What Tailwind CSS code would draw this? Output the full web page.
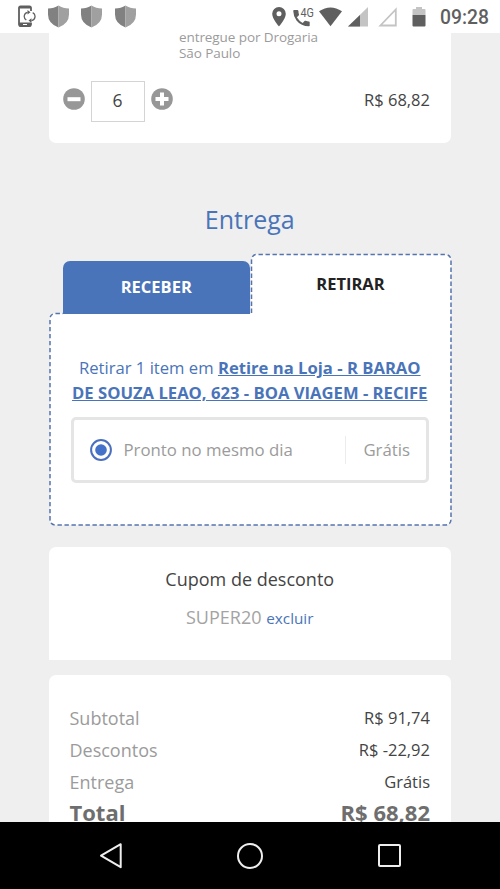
<!DOCTYPE html>
<html lang="pt-BR">
<head>
<meta charset="utf-8">
<meta name="viewport" content="width=device-width, initial-scale=1">
<title>Carrinho</title>
<script src="https://cdn.jsdelivr.net/npm/@tailwindcss/browser@4"></script>
</head>
<body class="flex h-[889px] w-[500px] flex-col overflow-hidden bg-[#efefef] font-['Open_Sans',sans-serif] text-[#444]">
  <!-- Status bar -->
  <header class="flex h-[33px] shrink-0 items-center bg-white pl-[16.500px] pr-[11px] text-[#5f5f5f]">
    <svg class="mr-[12px] h-[23px] w-[19px]" viewBox="0 0 19 23"><path d="M14 6V3Q14 1.500 12.500 1.500H3.500Q2 1.500 2 3V19.500Q2 21 3.500 21H12.500Q14 21 14 19.500V18" fill="none" stroke="currentColor" stroke-width="1.800"/><path d="M2 1H14V3.500H2zM2 17.500H14V21.500H2z" fill="currentColor"/><rect x="6" y="19" width="4" height="1" fill="#fff"/><path d="M9.300 15A4.200 4.200 0 0 1 10.500 7.300M15.700 7.700A4.200 4.200 0 0 1 14.500 15.600" fill="none" stroke="currentColor" stroke-width="1.300"/><path d="M10.500 5l3 2.300-3 2.300zM14.500 13.300v4.600l-3-2.300z" fill="currentColor"/></svg>
    <svg class="mr-[12.500px] h-[23px] w-[21px]" viewBox="0 0 21 23"><path d="M10.500 .5Q6 3.500 0 3.500V9.500Q0 18.500 10.500 22.500Z" fill="#818181"/><path d="M10.500 .5Q15 3.500 21 3.500V9.500Q21 18.500 10.500 22.500Z" fill="#a0a0a0"/></svg>
    <svg class="mr-[12.500px] h-[23px] w-[21px]" viewBox="0 0 21 23"><path d="M10.500 .5Q6 3.500 0 3.500V9.500Q0 18.500 10.500 22.500Z" fill="#818181"/><path d="M10.500 .5Q15 3.500 21 3.500V9.500Q21 18.500 10.500 22.500Z" fill="#a0a0a0"/></svg>
    <svg class="h-[23px] w-[21px]" viewBox="0 0 21 23"><path d="M10.500 .5Q6 3.500 0 3.500V9.500Q0 18.500 10.500 22.500Z" fill="#818181"/><path d="M10.500 .5Q15 3.500 21 3.500V9.500Q21 18.500 10.500 22.500Z" fill="#a0a0a0"/></svg>
    <svg class="ml-auto mr-[7px] h-[20px] w-[14px]" viewBox="0 0 14 20"><path fill-rule="evenodd" d="M7 0A6.800 6.800 0 0 0 .2 6.800C.2 12 7 19.500 7 19.500S13.800 12 13.800 6.800A6.800 6.800 0 0 0 7 0zM7 4.300a2.500 2.500 0 1 1 0 5 2.500 2.500 0 0 1 0-5z" fill="currentColor"/></svg>
    <svg class="mr-[4px] h-[20px] w-[22px]" viewBox="0 0 22 20"><path d="M1.200 3H4.500Q5.200 3 5.400 4Q5.500 6 6 7.500Q6.100 8.100 5.700 8.500L3.800 10.300Q6 14 9.700 16L11.500 14Q12 13.600 12.600 13.800Q14.300 14.300 16 14.400Q16.700 14.500 16.700 15.200V18.500Q16.700 19.300 16 19.300Q8 19.300 3.500 13.500Q.3 9 .2 3.800Q.2 3 1.200 3Z" fill="currentColor"/><text x="7.500" y="9.800" font-family="Roboto" font-size="12.500" textLength="13.500" lengthAdjust="spacingAndGlyphs" fill="currentColor">4G</text></svg>
    <svg class="mr-[6px] h-[20px] w-[23px]" viewBox="0 0 23 20"><path d="M0 4.300Q11.500-3.500 23 4.300L11.500 19.300Z" fill="currentColor"/></svg>
    <svg class="mr-[10px] h-[20px] w-[20px]" viewBox="0 0 20 20"><path d="M20 0V19.500H0Z" fill="#c4c4c4"/><path d="M12 8V19.500H0Z" fill="currentColor"/></svg>
    <svg class="mr-[15px] h-[20px] w-[19px]" viewBox="0 0 19 20"><path d="M17.800 2.500V18.500H2.400Z" fill="none" stroke="#c4c4c4" stroke-width="1.800"/></svg>
    <svg class="mr-[14px] h-[20px] w-[14px]" viewBox="0 0 14 20"><path d="M4 0H10V2H12.500Q13.500 2 13.500 3V8H.5V3Q.5 2 1.500 2H4Z" fill="#c4c4c4"/><path d="M.5 8H13.500V18.500Q13.500 19.500 12.500 19.500H1.500Q.5 19.500 .5 18.500Z" fill="currentColor"/></svg>
    <span class="mt-[2px] w-[49px] whitespace-nowrap font-['Roboto',sans-serif] text-[19.300px] font-medium leading-[22px]">09:28</span>
  </header>

  <main class="flex h-[789px] shrink-0 flex-col overflow-hidden pl-[48.500px] pr-[49px]">
    <!-- Cart item -->
    <section class="h-[110px] shrink-0 rounded-b-[7px] bg-white">
      <p class="-mt-[4px] ml-[130.500px] text-[13.500px] leading-[16px] tracking-[-0.08px] text-[#9b9b9b]">entregue por Drogaria<br>São Paulo</p>
      <div class="mt-[20px] flex items-center pl-[14px] pr-[21px]">
        <svg class="-mt-[5px] h-[22px] w-[22px]" viewBox="0 0 22 22"><circle cx="11" cy="11" r="10.800" fill="#979797"/><rect x="4.500" y="9.200" width="13" height="4" fill="#fff"/></svg>
        <div class="ml-[6px] flex h-[41px] w-[54px] items-center justify-center border-[1.500px] border-[#d4d4d4] pb-[3px] text-[17.500px] leading-[24px] text-[#444]">6</div>
        <svg class="-mt-[5px] ml-[6px] h-[22px] w-[22px]" viewBox="0 0 22 22"><circle cx="11" cy="11" r="10.800" fill="#979797"/><path d="M9 4.500h4V9h4.500v4H13v4.500H9V13H4.500V9H9z" fill="#fff"/></svg>
        <span class="ml-auto -mt-[3px] text-[16.500px] leading-[24px]">R$ 68,82</span>
      </div>
    </section>

    <h2 class="mt-[58px] text-center text-[25px] leading-[36px] text-[#4a74b9]">Entrega</h2>

    <!-- Delivery tabs and pickup panel -->
    <section class="relative mt-[16px] h-[273px] shrink-0">
      <svg class="absolute inset-0 h-[273px] w-[403px]" viewBox="0 0 403 273"><path d="M202.500 61V8Q202.500 1.500 208 1.500H396Q402 1.500 402 8V266Q402 272 396 272H7Q1 272 1 266V66Q1 60.500 7 60.500H202.500Z" fill="#fff"/><path d="M202.500 60V8Q202.500 1.500 208 1.500H396Q402 1.500 402 8V266Q402 272 396 272H7Q1 272 1 266V66Q1 60.500 7 60.500H14" fill="none" stroke="#5574ae" stroke-width="1.500" stroke-dasharray="4.400 2.600"/></svg>
      <div class="relative flex h-[61px] items-end pl-[14px] text-[16.500px] font-bold leading-[24px]">
        <div class="flex h-[53px] w-[187.500px] items-center justify-center rounded-t-[7px] bg-[#4a74b9] pb-px text-white">RECEBER</div>
        <div class="flex h-[60px] flex-1 items-center justify-center text-[#222]">RETIRAR</div>
      </div>
      <div class="relative px-[22px] pt-[41px]">
        <p class="text-center text-[16.650px] leading-[25px] whitespace-nowrap text-[#4a74b9]">Retirar 1 item em <b class="underline">Retire na Loja - R BARAO<br>DE SOUZA LEAO, 623 - BOA VIAGEM - RECIFE</b></p>
        <div class="mt-[12px] flex h-[66px] items-center rounded-[5px] border-[3px] border-[#e5e5e5] px-[16px] text-[16.800px] leading-[24px] text-[#9b9b9b]">
          <svg class="h-[22px] w-[22px]" viewBox="0 0 22 22"><circle cx="11" cy="11" r="9.900" fill="none" stroke="#4a6fbf" stroke-width="2"/><circle cx="11" cy="11" r="5.800" fill="#4472c9"/></svg>
          <span class="ml-[12px]">Pronto no mesmo dia</span>
          <span class="ml-auto flex h-[28px] items-center border-l border-[#ececec] pl-[17px]">Grátis</span>
        </div>
      </div>
    </section>

    <!-- Coupon -->
    <section class="mt-[21px] h-[112.500px] shrink-0 rounded-t-[7px] bg-white pt-[19px] text-center">
      <h3 class="text-[18px] leading-[26px]">Cupom de desconto</h3>
      <p class="mt-[12px] text-[18px] leading-[26px] text-[#a3a3a3]">SUPER20 <a class="text-[15.300px] text-[#4a74b9]">excluir</a></p>
    </section>

    <!-- Totals -->
    <section class="mt-[15.500px] h-[160px] shrink-0 rounded-t-[7px] bg-white px-[21px] pt-[27px] text-[16.500px] leading-[32px]">
      <div class="flex justify-between"><span class="text-[18px] text-[#9b9b9b]">Subtotal</span><span>R$ 91,74</span></div>
      <div class="flex justify-between"><span class="text-[18px] text-[#9b9b9b]">Descontos</span><span>R$ -22,92</span></div>
      <div class="flex justify-between"><span class="text-[18px] text-[#9b9b9b]">Entrega</span><span>Grátis</span></div>
      <div class="-mt-px flex justify-between text-[22px] font-bold leading-[30px] text-[#6e6e6e]"><span>Total</span><span>R$ 68,82</span></div>
    </section>
  </main>

  <!-- Navigation bar -->
  <nav class="flex h-[67px] shrink-0 items-center justify-between bg-black pl-[98px] pr-[98px]">
    <svg class="h-[28px] w-[26px]" viewBox="0 0 26 28"><path d="M22.700 2.200V25.200L3 13.700Z" fill="none" stroke="#eee" stroke-width="2" stroke-linejoin="round"/></svg>
    <svg class="h-[28px] w-[28px]" viewBox="0 0 28 28"><circle cx="14" cy="14" r="12" fill="none" stroke="#eee" stroke-width="2"/></svg>
    <svg class="h-[28px] w-[26px]" viewBox="0 0 26 28"><rect x="3" y="3" width="21" height="21" rx="1" fill="none" stroke="#eee" stroke-width="2"/></svg>
  </nav>
</body>
</html>
